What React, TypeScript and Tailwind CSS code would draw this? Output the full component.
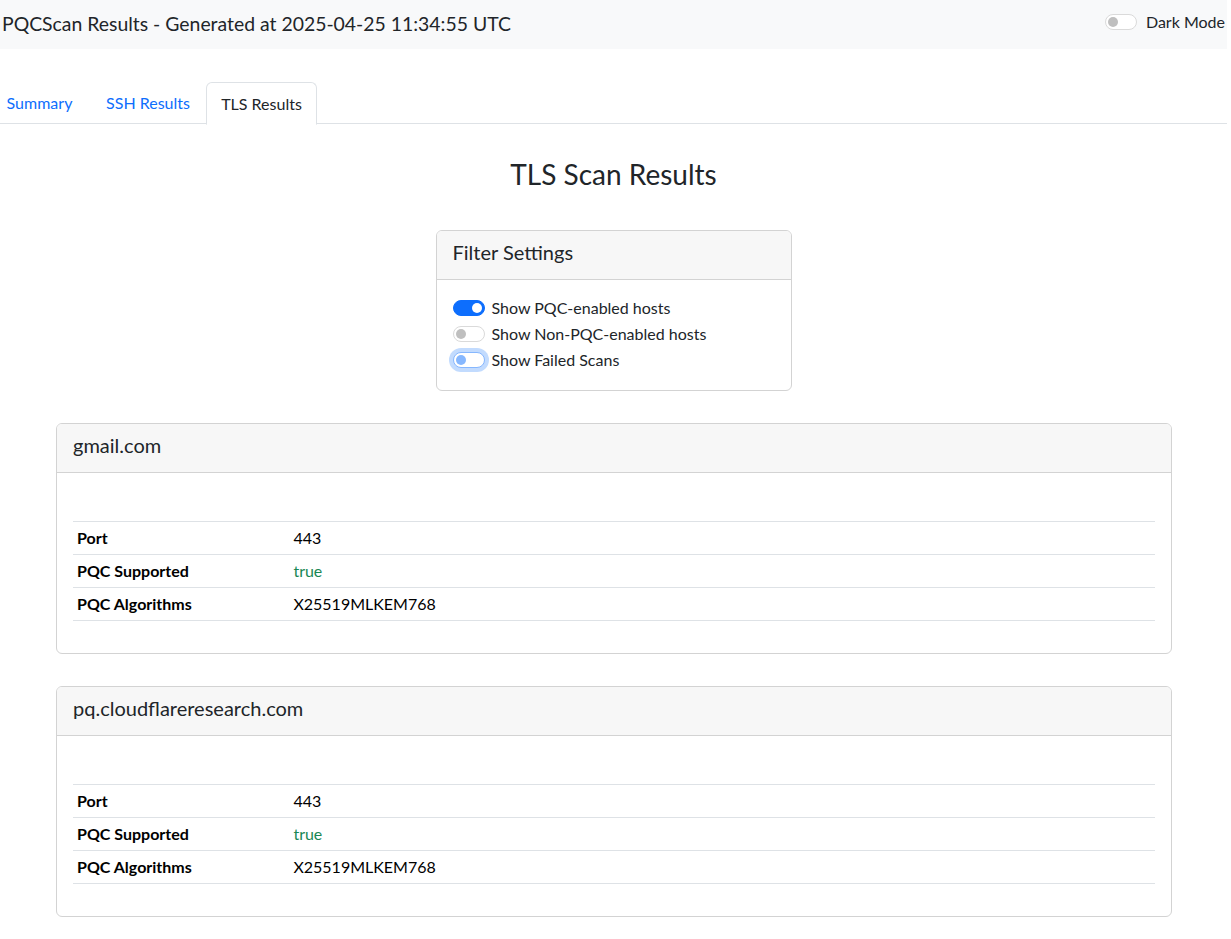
import React from "react";

const font = { fontFamily: '"Lato", "Noto Sans", sans-serif' };

function Switch({ state }: { state: "on" | "off" | "focus" }) {
  if (state === "on") {
    return (
      <div className="relative w-[32px] h-[16px] rounded-full bg-[#0d6efd] border border-[#0d6efd] shrink-0">
        <div className="absolute right-[2px] top-[2px] w-[10px] h-[10px] rounded-full bg-white" />
      </div>
    );
  }
  if (state === "focus") {
    return (
      <div className="relative w-[32px] h-[16px] rounded-full bg-white border border-[#86b7fe] shadow-[0_0_0_4px_rgba(13,110,253,0.25)] shrink-0">
        <div className="absolute left-[2px] top-[2px] w-[10px] h-[10px] rounded-full bg-[#86b7fe]" />
      </div>
    );
  }
  return (
    <div className="relative w-[32px] h-[16px] rounded-full bg-white border border-[#dadada] shrink-0">
      <div className="absolute left-[2px] top-[2px] w-[10px] h-[10px] rounded-full bg-[#bfbfbf]" />
    </div>
  );
}

function HostCard({ host }: { host: string }) {
  const rows: [string, string, boolean][] = [
    ["Port", "443", false],
    ["PQC Supported", "true", true],
    ["PQC Algorithms", "X25519MLKEM768", false],
  ];
  return (
    <div className="border border-[#d3d3d3] rounded-[6px] overflow-hidden">
      <div className="h-[49px] bg-[#f7f7f7] border-b border-[#d3d3d3] px-4 pt-[9px] text-[20px] leading-6 text-[#212529]">
        {host}
      </div>
      <div className="p-4">
        <div className="h-8" />
        <table className="w-full border-t border-[#dee2e6] mb-4">
          <tbody>
            {rows.map(([k, v, green]) => (
              <tr key={k} className="border-b border-[#dee2e6] h-[33px]">
                <td className="w-1/5 px-1 py-1 font-bold text-[16px] leading-6 text-black">{k}</td>
                <td className={"px-1 py-1 text-[16px] leading-6 " + (green ? "text-[#198754]" : "text-black")}>{v}</td>
              </tr>
            ))}
          </tbody>
        </table>
      </div>
    </div>
  );
}

export default function App() {
  return (
    <div className="w-[1227px] bg-white text-[#212529] min-h-[939px]" style={font}>
      <div className="h-[49px] bg-[#f8f9fa] flex items-start justify-between">
        <div className="pl-[2px] pt-[12px] text-[19.4px] leading-6">PQCScan Results - Generated at 2025-04-25 11:34:55 UTC</div>
        <div className="flex items-center pt-[10px] pr-[2px]">
          <Switch state="off" />
          <span className="ml-[9px] text-[16px] leading-6">Dark Mode</span>
        </div>
      </div>

      <div className="mt-[33px] border-b border-[#dee2e6] flex h-[42px] overflow-visible">
        <div className="ml-[-11px] w-[101px] h-[42px] flex items-center justify-center text-[#0d6efd] text-[16px]">Summary</div>
        <div className="w-[116px] h-[42px] flex items-center justify-center text-[#0d6efd] text-[16px]">SSH Results</div>
        <div className="w-[111px] flex items-center justify-center text-[16px] text-[#212529] bg-white border border-[#dee2e6] border-b-white rounded-t-[6px] mb-[-1px] h-[43px]">TLS Results</div>
      </div>

      <h3 className="mt-[33px] text-center text-[28px] leading-[34px] text-[#212529]">TLS Scan Results</h3>

      <div className="mt-[39px] mx-auto w-[356px] border border-[#d3d3d3] rounded-[6px] overflow-hidden">
        <div className="h-[49px] bg-[#f7f7f7] border-b border-[#d3d3d3] px-4 pt-[9px] text-[20px] leading-6">Filter Settings</div>
        <div className="px-4 pt-4 pb-[18px] flex flex-col gap-[2px]">
          <div className="flex items-center h-[24px]"><Switch state="on" /><span className="ml-[7px] text-[16px]">Show PQC-enabled hosts</span></div>
          <div className="flex items-center h-[24px]"><Switch state="off" /><span className="ml-[7px] text-[16px]">Show Non-PQC-enabled hosts</span></div>
          <div className="flex items-center h-[24px]"><Switch state="focus" /><span className="ml-[7px] text-[16px]">Show Failed Scans</span></div>
        </div>
      </div>

      <div className="mt-[32px] ml-[56px] w-[1116px] flex flex-col gap-[32px] pb-8">
        <HostCard host="gmail.com" />
        <HostCard host="pq.cloudflareresearch.com" />
      </div>
    </div>
  );
}
